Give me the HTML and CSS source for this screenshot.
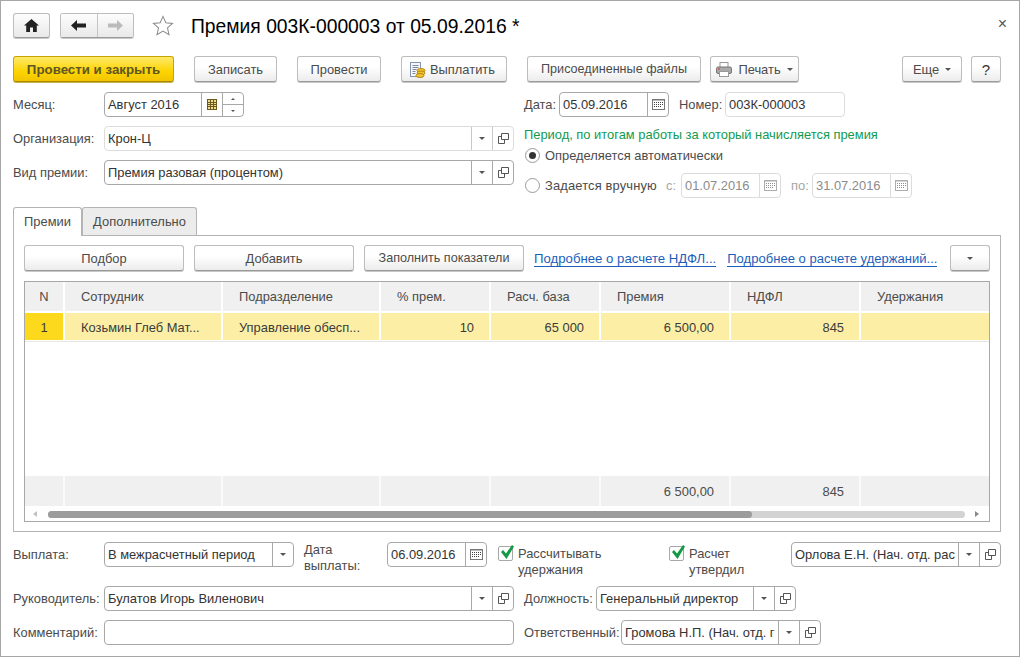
FILE: index.html
```html
<!DOCTYPE html>
<html lang="ru">
<head>
<meta charset="utf-8">
<title>Премия 003К-000003</title>
<link rel="stylesheet" href="styles.css">
</head>
<body>
<svg class="defs" width="0" height="0" aria-hidden="true">
  <defs>
    <symbol id="cal" viewBox="0 0 13 11"><rect x="0.5" y="0.5" width="12" height="10" fill="#fff" stroke="#777"/><path d="M1 1.500h11" stroke="#bbb"/><path d="M2 3.500h1M4 3.500h1M6 3.500h1M8 3.500h1M10 3.500h1M2 5.500h1M4 5.500h1M6 5.500h1M8 5.500h1M10 5.500h1M2 7.500h1M4 7.500h1M6 7.500h1M8 7.500h1" stroke="#444"/></symbol>
    <symbol id="open" viewBox="0 0 11 11"><path d="M3.500 0.500h7v6h-7z" fill="none" stroke="#555"/><path d="M3.500 3.500h-3v7h6v-4" fill="none" stroke="#555"/></symbol>
    <symbol id="check" viewBox="0 0 16 15"><path d="M2 7l2-2 3 3.500L13 0l2 1.500L7.500 14z" fill="#149a45"/></symbol>
  </defs>
</svg>
<main class="window">
  <header class="head">
    <button class="btn btn-home" type="button" aria-label="Домой"><svg width="15" height="13" viewBox="0 0 15 13"><path d="M7.500 0L0 6.500h2.200V13h3.800V8.500h3V13h3.800V6.500H15z" fill="#222"/></svg></button>
    <div class="nav">
      <button class="nav-b" type="button" aria-label="Назад"><svg width="15" height="11" viewBox="0 0 15 11"><path d="M6 0L0 5.500 6 11V7.500h9v-4H6z" fill="#222"/></svg></button>
      <button class="nav-b nav-next" type="button" aria-label="Вперед"><svg width="15" height="11" viewBox="0 0 15 11"><path d="M9 0l6 5.500L9 11V7.500H0v-4h9z" fill="#bbb"/></svg></button>
    </div>
    <svg class="star" width="22" height="21" viewBox="0 0 24 23"><path d="M12 1.500l3.100 7 7.400.7-5.600 5 1.700 7.300L12 17.600l-6.600 3.900 1.700-7.300-5.600-5 7.400-.7z" fill="#fff" stroke="#8a8a8a" stroke-width="1.100"/></svg>
    <h1 class="title">Премия 003К-000003 от 05.09.2016 *</h1>
    <span class="close">×</span>
  </header>

  <div class="cmd">
    <button class="btn btn-main w161" type="button">Провести и закрыть</button>
    <button class="btn w83 ml20" type="button">Записать</button>
    <button class="btn w84 ml20" type="button">Провести</button>
    <button class="btn w106 ml20 pay" type="button"><svg class="ico ico-pay" width="17" height="16" viewBox="0 0 17 16"><rect x="1.500" y="0.500" width="10" height="14" fill="#f4f7fb" stroke="#8595ad"/><path d="M3.500 3.500h6M3.500 5.500h6M3.500 7.500h4M3.500 9.500h3M3.500 11.500h3" stroke="#7d8ba3"/><ellipse cx="12" cy="8.500" rx="4" ry="2" fill="#f2c230" stroke="#b98a10"/><ellipse cx="12" cy="11" rx="4" ry="2" fill="#f2c230" stroke="#b98a10"/><ellipse cx="11" cy="13.500" rx="4" ry="2" fill="#f2c230" stroke="#b98a10"/></svg>Выплатить</button>
    <button class="btn w174 ml20 tight" type="button">Присоединенные файлы</button>
    <button class="btn w89 ml9" type="button"><svg class="ico" width="16" height="15" viewBox="0 0 16 15"><rect x="4" y="0.500" width="8" height="5" fill="#fff" stroke="#999"/><rect x="0.500" y="5" width="15" height="6.500" rx="1.500" fill="#a9a9a9" stroke="#777"/><rect x="3.500" y="9.500" width="9" height="5" fill="#fff" stroke="#999"/><path d="M2 7h2" stroke="#d33"/></svg>Печать<i class="caret caret-text"></i></button>
    <button class="btn w60 ml-auto" type="button">Еще<i class="caret caret-text"></i></button>
    <button class="btn w30 ml9 q" type="button">?</button>
  </div>

  <div class="form-top">
    <div class="col-left">
      <div class="row">
        <label class="lab">Месяц:</label>
        <div class="field w140"><span class="val">Август 2016</span>
          <span class="fb"><svg width="10" height="11" viewBox="0 0 10 11"><rect x="0.500" y="0.500" width="9" height="10" fill="#f0dd94" stroke="#6b5a1e"/><path d="M0 3.500h10M0 5.500h10M0 7.500h10M3.500 0v11M6.500 0v11" stroke="#6b5a1e"/></svg></span>
          <span class="spin"><i class="up"></i><i class="down"></i></span>
        </div>
      </div>
      <div class="row">
        <label class="lab">Организация:</label>
        <div class="field w410 light"><span class="val">Крон-Ц</span><span class="fb"><i class="caret"></i></span><span class="fb"><svg width="11" height="11"><use href="#open"/></svg></span></div>
      </div>
      <div class="row">
        <label class="lab">Вид премии:</label>
        <div class="field w410"><span class="val">Премия разовая (процентом)</span><span class="fb"><i class="caret"></i></span><span class="fb"><svg width="11" height="11"><use href="#open"/></svg></span></div>
      </div>
    </div>
    <div class="col-right">
      <div class="row">
        <label class="lab-auto lw35">Дата:</label>
        <div class="field w110"><span class="val">05.09.2016</span><span class="fb"><svg width="13" height="11"><use href="#cal"/></svg></span></div>
        <label class="lab-auto lw46 ml10">Номер:</label>
        <div class="field w120 light"><span class="val">003К-000003</span></div>
      </div>
      <div class="period">Период, по итогам работы за который начисляется премия</div>
      <div class="radio-row r1"><span class="radio on"></span>Определяется автоматически</div>
      <div class="radio-row r2"><span class="radio"></span><span class="r-t">Задается вручную</span>
        <span class="dim ml9 lw15">с:</span>
        <div class="field w100 light dis"><span class="val">01.07.2016</span><span class="fb"><svg class="faded" width="13" height="11"><use href="#cal"/></svg></span></div>
        <span class="dim ml10 lw21">по:</span>
        <div class="field w100 light dis"><span class="val">31.07.2016</span><span class="fb"><svg class="faded" width="13" height="11"><use href="#cal"/></svg></span></div>
      </div>
    </div>
  </div>

  <nav class="tabs">
    <span class="tab active">Премии</span>
    <span class="tab t-more">Дополнительно</span>
  </nav>
  <section class="panel">
    <div class="tool">
      <button class="btn w160" type="button">Подбор</button>
      <button class="btn w160 ml10" type="button">Добавить</button>
      <button class="btn w160 ml10 tight" type="button">Заполнить показатели</button>
      <a class="lnk lnk1 ml10" href="#">Подробнее о расчете НДФЛ...</a>
      <a class="lnk lnk2 ml11" href="#">Подробнее о расчете удержаний...</a>
      <button class="btn w40 ml-auto more" type="button"><i class="caret"></i></button>
    </div>
    <div class="table">
      <div class="tr thead">
        <span class="c c1 ctr">N</span><span class="c c2">Сотрудник</span><span class="c c3">Подразделение</span><span class="c c4">% прем.</span><span class="c c5">Расч. база</span><span class="c c6">Премия</span><span class="c c7">НДФЛ</span><span class="c c8">Удержания</span>
      </div>
      <div class="tr tbody">
        <span class="c c1 ctr num1">1</span><span class="c c2">Козьмин Глеб Мат...</span><span class="c c3">Управление обесп...</span><span class="c c4 rt">10</span><span class="c c5 rt">65 000</span><span class="c c6 rt">6 500,00</span><span class="c c7 rt">845</span><span class="c c8"></span>
      </div>
      <div class="spacer"></div>
      <div class="tr tfoot">
        <span class="c c1"></span><span class="c c2"></span><span class="c c3"></span><span class="c c4"></span><span class="c c5"></span><span class="c c6 rt">6 500,00</span><span class="c c7 rt">845</span><span class="c c8"></span>
      </div>
      <div class="scroll">
        <i class="arr arr-l"></i>
        <div class="track"><div class="thumb"></div></div>
        <i class="arr arr-r"></i>
      </div>
    </div>
  </section>

  <div class="row b1">
    <label class="lab">Выплата:</label>
    <div class="field w190"><span class="val">В межрасчетный период</span><span class="fb"><i class="caret"></i></span></div>
    <label class="lab2 ml10">Дата<br>выплаты:</label>
    <div class="field w100"><span class="val">06.09.2016</span><span class="fb"><svg width="13" height="11"><use href="#cal"/></svg></span></div>
    <span class="cb ml11"><svg width="16" height="15"><use href="#check"/></svg></span>
    <span class="cb-t t1">Рассчитывать<br>удержания</span>
    <span class="cb"><svg width="16" height="15"><use href="#check"/></svg></span>
    <span class="cb-t t2">Расчет<br>утвердил</span>
    <div class="field w210"><span class="val">Орлова Е.Н. (Нач. отд. рас</span><span class="fb"><i class="caret"></i></span><span class="fb"><svg width="11" height="11"><use href="#open"/></svg></span></div>
  </div>
  <div class="row b2">
    <label class="lab">Руководитель:</label>
    <div class="field w410"><span class="val">Булатов Игорь Виленович</span><span class="fb"><i class="caret"></i></span><span class="fb"><svg width="11" height="11"><use href="#open"/></svg></span></div>
    <label class="lab-auto lw72 ml10">Должность:</label>
    <div class="field w200"><span class="val">Генеральный директор</span><span class="fb"><i class="caret"></i></span><span class="fb"><svg width="11" height="11"><use href="#open"/></svg></span></div>
  </div>
  <div class="row b3">
    <label class="lab">Комментарий:</label>
    <div class="field w410"><span class="val"></span></div>
    <label class="lab-auto lw97 ml10">Ответственный:</label>
    <div class="field w200"><span class="val">Громова Н.П. (Нач. отд. г</span><span class="fb"><i class="caret"></i></span><span class="fb"><svg width="11" height="11"><use href="#open"/></svg></span></div>
  </div>
</main>
</body>
</html>
```
FILE: styles.css
```css
* { box-sizing: border-box; }
html, body { margin: 0; padding: 0; background: #fff; }
body { width: 1021px; height: 657px; overflow: hidden; font: 12.9px/15px "Liberation Sans", Arial, sans-serif; color: #4b4b4b; }
.defs { position: absolute; }
.window { width: 1020px; height: 657px; border: 1px solid #a6a6a6; padding: 12px 18px 0 12px; }
button { font: inherit; color: inherit; padding: 0; }

.head { display: flex; align-items: center; height: 25px; }
.btn { display: inline-flex; align-items: center; justify-content: center; height: 26px; padding-top: 1px; border: 1px solid #bdbdbd; border-bottom-color: #9a9a9a; border-radius: 3px; background: linear-gradient(#fff 0%, #fff 40%, #ececec 100%); box-shadow: 0 1px 0 #c8c8c8; flex: none; }
.tight { font-size: 12.6px; }
.btn-home { width: 37px; height: 25px; padding: 0; background: linear-gradient(#fdfdfd, #e9e9e9); }
.nav { display: flex; width: 74px; height: 25px; margin-left: 10px; border: 1px solid #bdbdbd; border-bottom-color: #9a9a9a; border-radius: 3px; box-shadow: 0 1px 0 #c8c8c8; overflow: hidden; }
.nav-b { flex: 1; display: flex; align-items: center; justify-content: center; border: 0; background: linear-gradient(#fdfdfd, #e9e9e9); }
.nav-next { border-left: 1px solid #c4c4c4; }
.star { margin-left: 18px; flex: none; }
.title { margin: 2px 0 0 17px; font-size: 19.3px; font-weight: 400; color: #000; line-height: 24px; white-space: nowrap; }
.close { margin: 0 -6px 4px auto; font-size: 16px; color: #555; }

.cmd { display: flex; align-items: center; margin-top: 18px; height: 26px; }
.btn-main { background: linear-gradient(#ffe96b, #fdd400 60%, #f2c500); border-color: #c9a400; border-bottom-color: #a88a00; font-weight: 700; font-size: 13.3px; color: #5f5525; box-shadow: 0 1px 0 #c9b24b; }
.ico { margin-right: 6px; flex: none; }
.ico-pay { margin-right: 4px; }
.pay { padding-right: 4px; }
.q { font-size: 15px; color: #333; }
.w30 { width: 30px; } .w40 { width: 40px; } .w60 { width: 60px; } .w83 { width: 83px; } .w84 { width: 84px; } .w89 { width: 89px; }
.w100 { width: 100px; } .w106 { width: 106px; } .w110 { width: 110px; } .w120 { width: 120px; } .w140 { width: 140px; }
.w160 { width: 160px; } .w161 { width: 161px; } .w174 { width: 174px; } .w190 { width: 190px; } .w200 { width: 200px; } .w210 { width: 210px; } .w410 { width: 410px; }
.lw15 { width: 15px; flex: none; } .lw21 { width: 21px; flex: none; } .lw35 { width: 35px; } .lw46 { width: 46px; } .lw72 { width: 72px; } .lw97 { width: 97px; }
.ml9 { margin-left: 9px; } .ml10 { margin-left: 10px; } .ml11 { margin-left: 11px; } .ml20 { margin-left: 20px; } .ml-auto { margin-left: auto; }

.caret { display: inline-block; width: 0; height: 0; border: 3px solid transparent; border-top: 3px solid #555; border-bottom: 0; }
.caret-text { margin-left: 6px; }

.form-top { display: flex; margin-top: 10px; height: 106px; }
.col-left { width: 501px; flex: none; display: flex; flex-direction: column; gap: 9px; }
.col-right { margin-left: 10px; flex: 1; }
.row { display: flex; align-items: center; height: 25px; }
.lab { width: 91px; flex: none; white-space: nowrap; }
.lab-auto { flex: none; white-space: nowrap; }
.field { display: flex; height: 25px; flex: none; border: 1px solid #a8a8a8; border-radius: 4px; background: #fff; color: #333; align-items: stretch; }
.field.light { border-color: #dcdcdc; }
.val { flex: 1; min-width: 0; padding-left: 3px; line-height: 23px; white-space: nowrap; overflow: hidden; }
.fb { width: 21px; flex: none; display: flex; align-items: center; justify-content: center; border-left: 1px solid #a8a8a8; }
.field.light .fb { border-left-color: #dcdcdc; }
.field.w410.light .fb { border-left-color: #c8c8c8; }
.spin { width: 21px; flex: none; display: flex; flex-direction: column; border-left: 1px solid #a8a8a8; }
.spin .up, .spin .down { flex: 1; display: flex; align-items: center; justify-content: center; }
.spin .down { border-top: 1px solid #a8a8a8; }
.spin .up::after { content: ""; border: 2px solid transparent; border-bottom: 2px solid #555; border-top: 0; }
.spin .down::after { content: ""; border: 2px solid transparent; border-top: 2px solid #555; border-bottom: 0; }

.period { margin-top: 10px; height: 15px; color: #109a50; white-space: nowrap; }
.radio-row { display: flex; align-items: center; white-space: nowrap; }
.r1 { margin-top: 6px; height: 15px; }
.r2 { margin-top: 10px; height: 25px; }
.radio { width: 15px; height: 15px; margin: 0 5px 0 1px; border: 1px solid #9a9a9a; border-radius: 50%; background: #fff; flex: none; display: flex; align-items: center; justify-content: center; }
.radio.on::after { content: ""; width: 7px; height: 7px; border-radius: 50%; background: #333; }
.r-t { width: 112px; flex: none; letter-spacing: .15px; }
.dim { color: #a5a5a5; }
.field.dis { color: #8c8c8c; }
.faded { opacity: .6; }

.tabs { display: flex; margin-top: 9px; height: 28px; position: relative; z-index: 1; }
.tab { height: 28px; padding-top: 1px; line-height: 26px; text-align: center; background: #ececec; border: 1px solid #b4b4b4; border-bottom: 0; border-radius: 3px 3px 0 0; }
.t-more { width: 115px; }
.tab.active { width: 69px; background: #fff; height: 29px; }
.panel { width: 988px; height: 297px; border: 1px solid #b4b4b4; padding: 9px 10px; }
.tool { display: flex; align-items: center; height: 26px; }
.lnk { margin-top: 2px; color: #1c5fbb; text-decoration: none; border-bottom: 1px solid #1c5fbb; white-space: nowrap; line-height: 14px; }
.lnk1 { font-size: 13.2px; }
.lnk2 { font-size: 13.05px; }
.table { width: 966px; height: 241px; margin-top: 10px; border: 1px solid #a8a8a8; display: flex; flex-direction: column; }
.tr { display: flex; flex: none; }
.thead { height: 31px; background: #f0f0f0; border-bottom: 2px solid #fff; }
.tbody { height: 27px; background: #fcefa5; margin-bottom: 1px; }
.c { display: block; border-right: 2px solid #fff; padding: 0 15px 0 16px; white-space: nowrap; overflow: hidden; line-height: 30px; }
.c1 { width: 40px; padding: 0; } .c2, .c3 { width: 158px; } .c4, .c5 { width: 110px; } .c6, .c7 { width: 130px; } .c8 { flex: 1; border-right: 0; }
.ctr { text-align: center; }
.rt { text-align: right; }
.tbody .c { line-height: 29px; color: #3b3b3b; }
.num1 { background: #fdd91e; }
.spacer { flex: 1; border-top: 1px solid #e6e6e6; }
.tfoot { height: 30px; background: #f0f0f0; }
.tfoot .c { border-right: 2px solid #fafafa; line-height: 31px; }
.tfoot .c8 { border-right: 0; }
.scroll { display: flex; align-items: center; height: 15px; flex: none; padding: 1px 0 0 8px; }
.track { width: 917px; height: 7px; margin: 0 10px 0 11px; background: #d3d3d3; border-radius: 4px; flex: none; }
.thumb { width: 704px; height: 7px; background: #9c9c9c; border-radius: 4px; }
.arr { width: 0; height: 0; border: 3px solid transparent; flex: none; }
.arr-l { border-right: 4px solid #c0c0c0; border-left: 0; }
.arr-r { border-left: 4px solid #888; border-right: 0; }
.b1 { margin-top: 10px; }
.b2 { margin-top: 19px; }
.b3 { margin-top: 9px; }
.lab2 { width: 83px; flex: none; line-height: 16px; margin-top: 6px; }
.cb { width: 15px; height: 15px; border: 1px solid #a8a8a8; border-radius: 2px; background: #fff; flex: none; align-self: flex-start; margin-top: 4px; position: relative; }
.cb svg { position: absolute; left: 0; top: -2px; }
.cb-t { flex: none; align-self: flex-start; margin: 4px 0 0 5px; line-height: 16px; height: 32px; }
.t1 { width: 151px; }
.t2 { width: 102px; }
```
